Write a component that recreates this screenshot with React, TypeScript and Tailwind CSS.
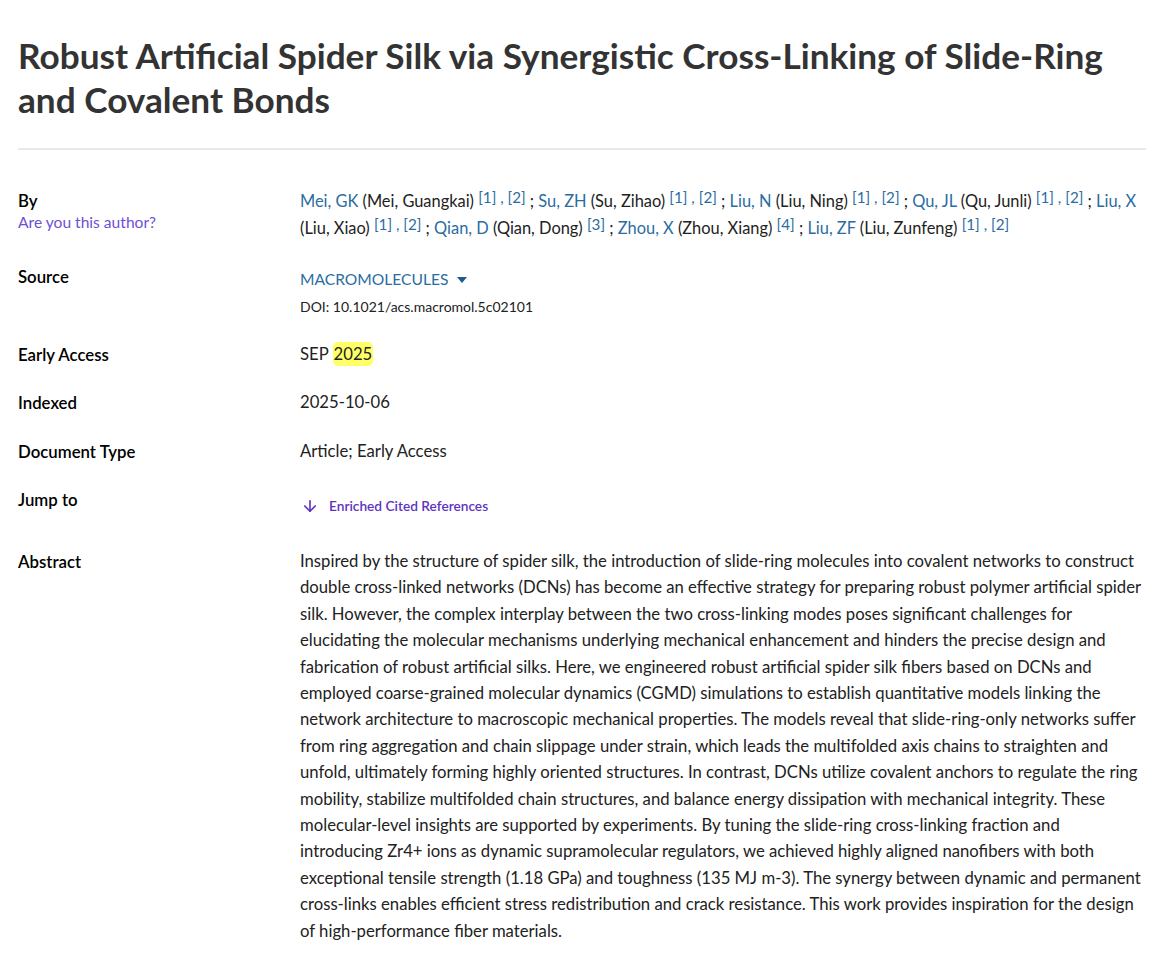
import React from "react";
import { ArrowDown } from "lucide-react";

const abstractLines = [
  "Inspired by the structure of spider silk, the introduction of slide-ring molecules into covalent networks to construct",
  "double cross-linked networks (DCNs) has become an effective strategy for preparing robust polymer artificial spider",
  "silk. However, the complex interplay between the two cross-linking modes poses significant challenges for",
  "elucidating the molecular mechanisms underlying mechanical enhancement and hinders the precise design and",
  "fabrication of robust artificial silks. Here, we engineered robust artificial spider silk fibers based on DCNs and",
  "employed coarse-grained molecular dynamics (CGMD) simulations to establish quantitative models linking the",
  "network architecture to macroscopic mechanical properties. The models reveal that slide-ring-only networks suffer",
  "from ring aggregation and chain slippage under strain, which leads the multifolded axis chains to straighten and",
  "unfold, ultimately forming highly oriented structures. In contrast, DCNs utilize covalent anchors to regulate the ring",
  "mobility, stabilize multifolded chain structures, and balance energy dissipation with mechanical integrity. These",
  "molecular-level insights are supported by experiments. By tuning the slide-ring cross-linking fraction and",
  "introducing Zr4+ ions as dynamic supramolecular regulators, we achieved highly aligned nanofibers with both",
  "exceptional tensile strength (1.18 GPa) and toughness (135 MJ m-3). The synergy between dynamic and permanent",
  "cross-links enables efficient stress redistribution and crack resistance. This work provides inspiration for the design",
  "of high-performance fiber materials.",
];

type Author = { short: string; full: string; refs: string[] };
const authors: Author[] = [
  { short: "Mei, GK", full: "Mei, Guangkai", refs: ["1", "2"] },
  { short: "Su, ZH", full: "Su, Zihao", refs: ["1", "2"] },
  { short: "Liu, N", full: "Liu, Ning", refs: ["1", "2"] },
  { short: "Qu, JL", full: "Qu, Junli", refs: ["1", "2"] },
  { short: "Liu, X", full: "Liu, Xiao", refs: ["1", "2"] },
  { short: "Qian, D", full: "Qian, Dong", refs: ["3"] },
  { short: "Zhou, X", full: "Zhou, Xiang", refs: ["4"] },
  { short: "Liu, ZF", full: "Liu, Zunfeng", refs: ["1", "2"] },
];

function Label({ children }: { children: React.ReactNode }) {
  return (
    <div className="w-[282px] shrink-0 text-[16.8px] leading-[27px] font-semibold text-black">
      {children}
    </div>
  );
}

export default function App() {
  return (
    <div
      className="min-h-[967px] bg-white px-[18px] text-[#222]"
      style={{ fontFamily: "Lato, 'Noto Sans', sans-serif" }}
    >
      <h1 className="pt-[33px] text-[35.2px] leading-[44px] font-bold text-[#333]">
        Robust Artificial Spider Silk via Synergistic Cross-Linking of Slide-Ring
        <br />
        and Covalent Bonds
      </h1>
      <div className="mt-[27px] h-[2px] w-[1128px] bg-[#e9e9e9]" />

      {/* By */}
      <div className="mt-[37px] flex">
        <div className="w-[282px] shrink-0">
          <div className="text-[16.8px] leading-[27px] font-semibold text-black">By</div>
          <div className="-mt-[2px] text-[15.6px] leading-[20px] text-[#6f4fd6]">
            Are you this author?
          </div>
        </div>
        <div className="w-[846px] text-[16.4px] leading-[27px] text-[#222]">
          {authors.map((a, i) => (
            <React.Fragment key={a.short}>
              <span className="text-[#2b6d9f]">{a.short}</span>
              {i === 4 ? <br /> : " "}({a.full}){" "}
              <span className="align-[4px] text-[15.2px] leading-none text-[#2b6d9f]">
                {a.refs.map((r, j) => (
                  <React.Fragment key={r}>
                    {j > 0 && " , "}[{r}]
                  </React.Fragment>
                ))}
              </span>
              {i < authors.length - 1 && " ; "}
            </React.Fragment>
          ))}
        </div>
      </div>

      {/* Source */}
      <div className="mt-[22px] flex">
        <Label>Source</Label>
        <div className="pt-[3px]">
          <div className="flex items-center text-[15.6px] leading-[27px] text-[#2b6d9f]">
            <span>MACROMOLECULES</span>
            <span className="ml-[9px] mt-[1px] h-0 w-0 border-x-[5px] border-t-[6px] border-x-transparent border-t-[#1f5a8a]" />
          </div>
          <div className="mt-[4px] text-[14px] leading-[20px] text-[#222]">
            DOI: 10.1021/acs.macromol.5c02101
          </div>
        </div>
      </div>

      {/* Early Access */}
      <div className="mt-[24px] flex">
        <Label>Early Access</Label>
        <div className="text-[16.7px] leading-[27px]">
          SEP <span className="rounded-[5px] bg-[#ffff66] px-[1px] py-[2px]">2025</span>
        </div>
      </div>

      {/* Indexed */}
      <div className="mt-[21px] flex">
        <Label>Indexed</Label>
        <div className="text-[16.7px] leading-[27px]">2025-10-06</div>
      </div>

      {/* Document Type */}
      <div className="mt-[22px] flex">
        <Label>Document Type</Label>
        <div className="text-[16.7px] leading-[27px]">Article; Early Access</div>
      </div>

      {/* Jump to */}
      <div className="mt-[21px] flex">
        <Label>Jump to</Label>
        <div className="flex items-center pt-[10px] text-[13.7px] leading-[20px] font-semibold text-[#5e33bf]">
          <ArrowDown className="ml-[1px] h-[18px] w-[18px]" strokeWidth={2.2} />
          <span className="ml-[10px]">Enriched Cited References</span>
        </div>
      </div>

      {/* Abstract */}
      <div className="mt-[32px] flex pb-[20px]">
        <Label>Abstract</Label>
        <div className="text-[16.7px] leading-[26.4px] text-[#222]">
          {abstractLines.map((l, i) => (
            <span key={i} className="block whitespace-nowrap">
              {l}
            </span>
          ))}
        </div>
      </div>
    </div>
  );
}
